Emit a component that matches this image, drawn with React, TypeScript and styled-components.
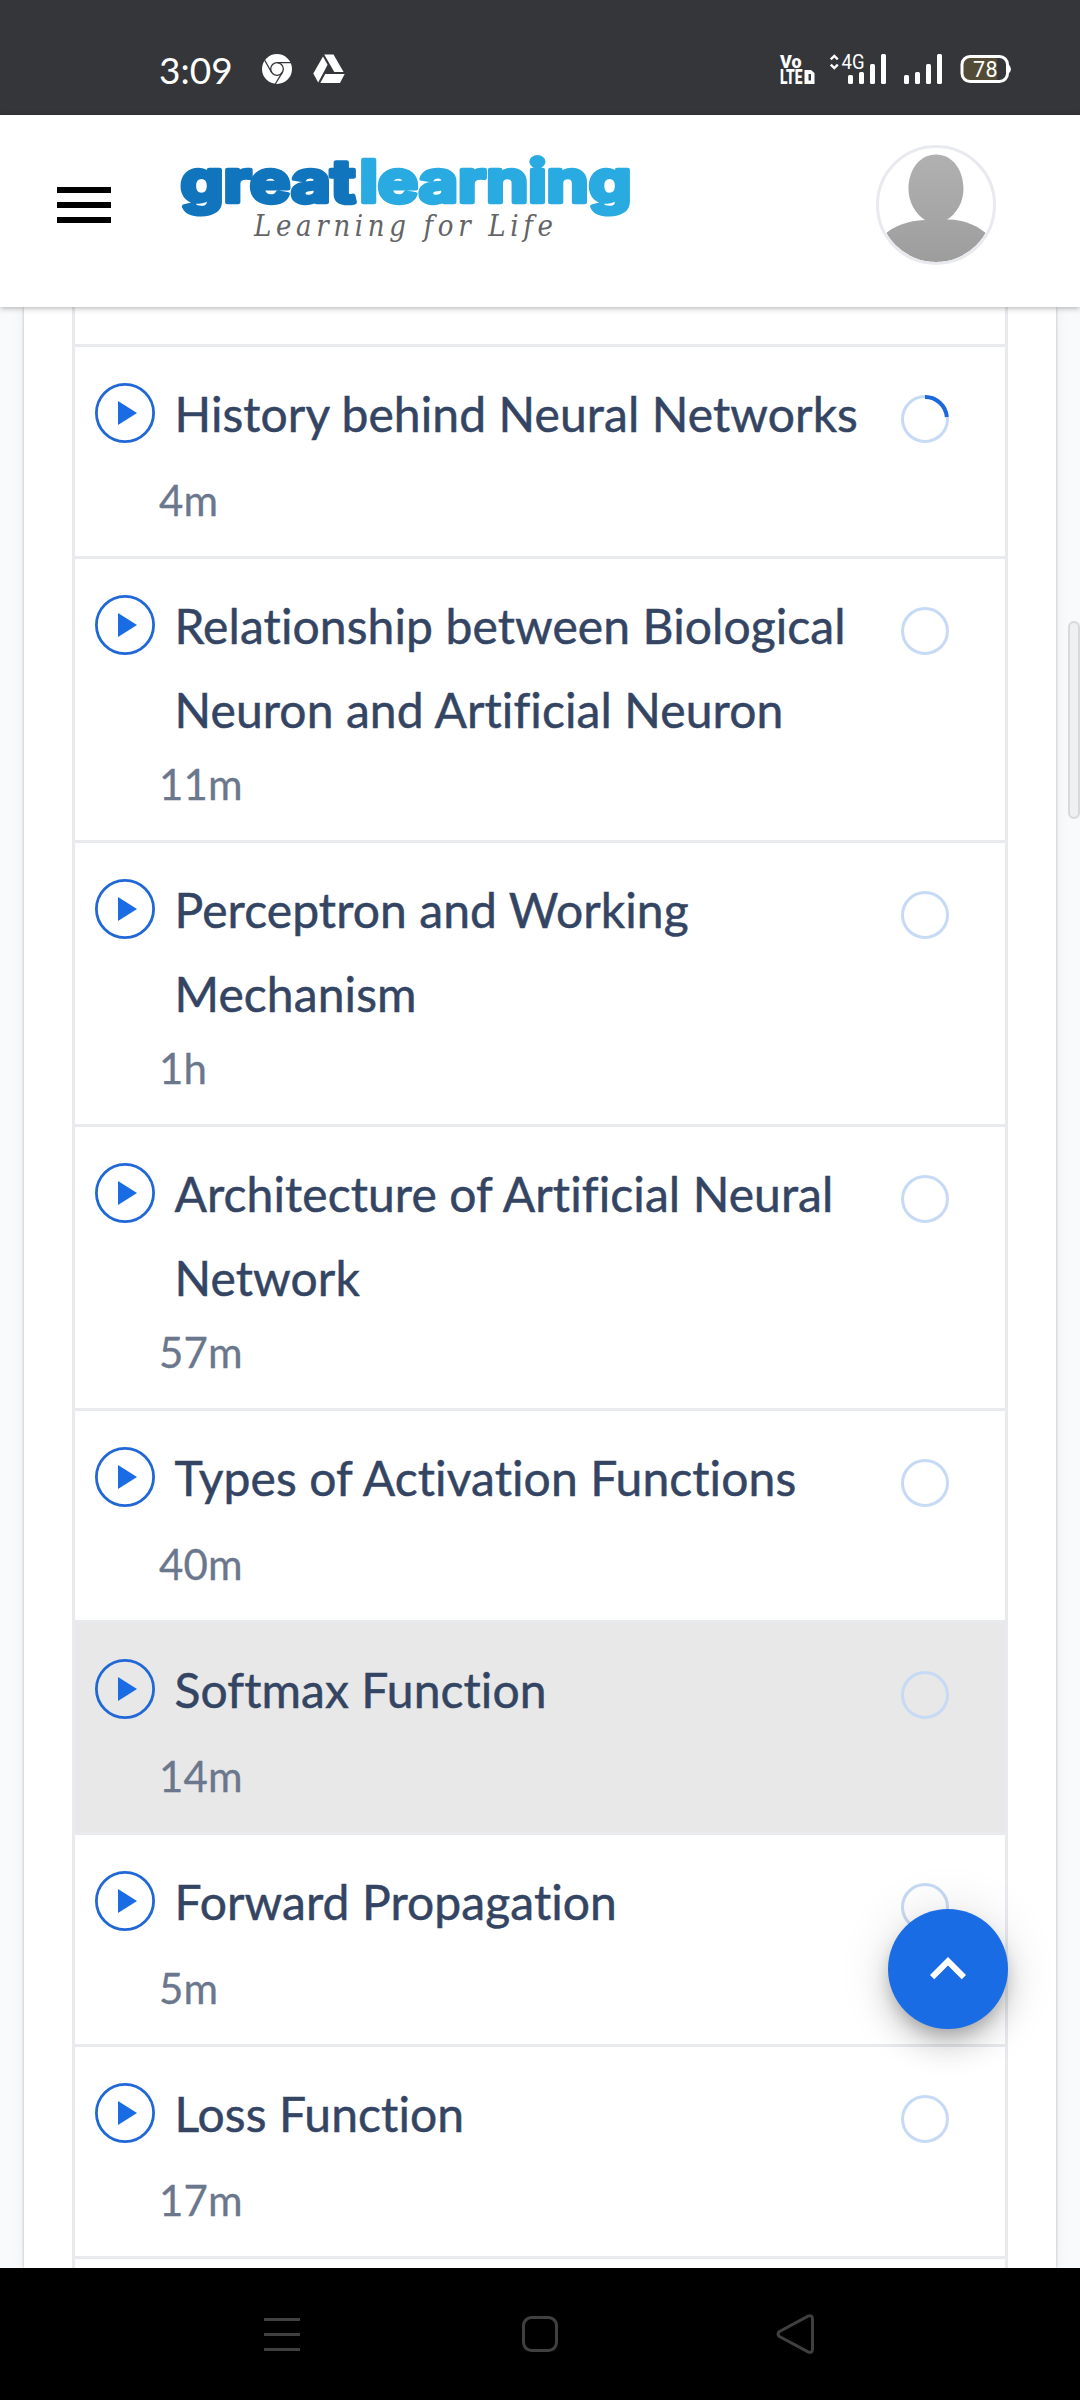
import React from "react";
import styled, { createGlobalStyle } from "styled-components";

const GlobalStyle = createGlobalStyle`
  *, *::before, *::after { box-sizing: border-box; }
  body { margin: 0; background: #ffffff; font-family: Lato, "Open Sans", sans-serif; }
  svg { display: block; flex: none; overflow: visible; }
`;

const Screen = styled.div`
  position: relative;
  display: flex;
  flex-direction: column;
  width: 1080px;
  height: 2400px;
  overflow: hidden;
`;

const StatusBar = styled.div`
  display: flex;
  flex: none;
  align-items: center;
  height: 115px;
  padding: 23px 69px 0 159px;
  background: #35363a;
  color: #ffffff;
`;

const Clock = styled.span`
  width: 103px;
  padding-top: 1px;
  font-size: 37px;
  line-height: 44px;
`;

const StatusIcons = styled.div<{ $gap: number; $end?: boolean }>`
  display: flex;
  align-items: center;
  gap: ${(p) => p.$gap}px;
  margin-left: ${(p) => (p.$end ? "auto" : "0")};
`;

const Header = styled.header`
  position: relative;
  z-index: 1;
  display: flex;
  flex: none;
  align-items: flex-start;
  height: 192px;
  padding: 30px 84px 0 57px;
  background: #ffffff;
  box-shadow: 0 1px 6px rgba(0, 0, 0, 0.32);
`;

const MenuButton = styled.button`
  display: flex;
  flex-direction: column;
  gap: 9px;
  width: 54px;
  margin: 42px 67px 0 0;
  padding: 0;
  border: 0;
  background: none;
`;

const MenuBar = styled.span`
  height: 6px;
  background: #000000;
`;

const Avatar = styled.div`
  width: 120px;
  height: 120px;
  margin-left: auto;
  border: 3px solid #e9eaef;
  border-radius: 50%;
  overflow: hidden;
`;

const Main = styled.main`
  flex: 1;
  min-height: 0;
  overflow: hidden;
  padding: 0 24px;
  background: #f8fafc;
`;

const Card = styled.section`
  height: 100%;
  padding: 0 48px;
  background: #ffffff;
  box-shadow: 0 0 3px rgba(0, 0, 0, 0.26), 0 0 16px rgba(0, 0, 0, 0.05);
`;

const LessonList = styled.ul`
  height: 100%;
  margin: 0;
  padding: 0;
  overflow: hidden;
  border: solid #e9eaee;
  border-width: 0 3px;
  list-style: none;
`;

const PreviousRow = styled.li`
  height: 40px;
  border-bottom: 3px solid #e9eaee;
`;

const LessonRow = styled.li<{ $active?: boolean }>`
  padding: 25px 56px 23px 20px;
  border-bottom: 3px solid #e9eaee;
  background: ${(p) => (p.$active ? "#e8e8e8" : "#ffffff")};
`;

const LessonTop = styled.div`
  display: grid;
  grid-template-columns: 60px 1fr 48px;
  column-gap: 19.5px;
  align-items: start;
  min-height: 95px;
`;

const IconSlot = styled.span<{ $top: number }>`
  padding-top: ${(p) => p.$top}px;
`;

const Title = styled.span<{ $lines: number }>`
  height: ${(p) => p.$lines * 84 - (p.$lines > 1 ? 1 : 0)}px;
  color: #344563;
  font-size: 48px;
  font-variant-ligatures: none;
  letter-spacing: 0.09px;
  line-height: 84px;
  white-space: pre;
  -webkit-text-stroke: 0.5px #344563;
`;

const Duration = styled.div`
  padding-left: 64px;
  color: #6b778c;
  font-size: 42px;
  letter-spacing: 0.2px;
  line-height: 66px;
  -webkit-text-stroke: 0.3px #6b778c;
`;

const ScrollThumb = styled.div`
  position: absolute;
  top: 621px;
  right: 0;
  width: 12px;
  height: 198px;
  border: 2px solid #d7d9da;
  border-radius: 6px;
  background: #f0f0f0;
`;

const TopButton = styled.button`
  position: absolute;
  right: 72px;
  bottom: 371px;
  z-index: 2;
  display: flex;
  align-items: center;
  justify-content: center;
  width: 120px;
  height: 120px;
  padding: 0;
  border: 0;
  border-radius: 50%;
  background: #1a6ce4;
  box-shadow: 0 9px 15px -3px rgba(0, 0, 0, 0.2), 0 18px 30px rgba(0, 0, 0, 0.14),
    0 3px 54px rgba(0, 0, 0, 0.12);
`;

const NavBar = styled.nav`
  display: grid;
  flex: none;
  grid-template-columns: repeat(3, 258px);
  justify-content: center;
  justify-items: center;
  height: 132px;
  padding-top: 44px;
  background: #000000;
`;

const lessons = [
  { title: "History behind Neural Networks", time: "4m", started: true },
  { title: "Relationship between Biological\nNeuron and Artificial Neuron", time: "11m" },
  { title: "Perceptron and Working\nMechanism", time: "1h" },
  { title: "Architecture of Artificial Neural\nNetwork", time: "57m" },
  { title: "Types of Activation Functions", time: "40m" },
  { title: "Softmax Function", time: "14m", active: true },
  { title: "Forward Propagation", time: "5m" },
  { title: "Loss Function", time: "17m" },
];

const PlayIcon = () => (
  <svg width="60" height="60" viewBox="0 0 60 60">
    <circle cx="30" cy="30" r="28.6" fill="none" stroke="#2068d6" strokeWidth="2.8" />
    <path d="M23 18L42 30L23 42Z" fill="#1a6ce4" />
  </svg>
);

const ProgressRing = ({ started }: { started?: boolean }) => (
  <svg width="48" height="48" viewBox="0 0 48 48" fill="none">
    <circle cx="24" cy="24" r="22.5" stroke="#c7daf5" strokeWidth="3" />
    {started && <path d="M24 2A21.8 21.8 0 0 1 45.8 22" stroke="#1b68da" strokeWidth="4" />}
  </svg>
);

const ChromeIcon = () => (
  <svg width="30" height="30" viewBox="0 0 30 30">
    <circle cx="15" cy="15" r="15" fill="#fff" />
    <g fill="none" stroke="#35363a" strokeWidth="1.3">
      <circle cx="15" cy="15" r="6.3" />
      <path d="M15 8.7H29M9.5 18.2L2.7 6.3M20.5 18.2L13.3 30" />
    </g>
  </svg>
);

const DriveIcon = () => (
  <svg width="32" height="30" viewBox="0 0 32 30" fill="#fff">
    <path d="M11.2 0.5H20.5L30.6 18H21.3Z" />
    <path d="M10 2.5L14.6 10.7L5.2 28.5L0.3 19.5Z" />
    <path d="M12.2 20H31.7L27 29H7.3Z" />
  </svg>
);

const Bars = () => (
  <g fill="#fff">
    <rect x="0" y="21" width="5" height="9" rx="1.5" />
    <rect x="11" y="18" width="5" height="12" rx="1.5" />
    <rect x="22" y="10" width="5" height="20" rx="1.5" />
    <rect x="33" y="0" width="5" height="30" rx="1.5" />
  </g>
);

const VolteIcon = () => (
  <svg width="35" height="30" viewBox="-3 0 35 30" fill="#fff" fontFamily="Roboto, sans-serif" fontWeight="900">
    <text x="0" y="14" fontSize="18.5" textLength="21.5" lengthAdjust="spacingAndGlyphs">Vo</text>
    <text x="0" y="30" fontSize="19.5" textLength="22.5" lengthAdjust="spacingAndGlyphs">LTE</text>
    <path fillRule="evenodd" d="M24.5 16H31L34.5 19V30H24.5ZM28.5 20V26.5H31V20Z" />
  </svg>
);

const MobileSignal = () => (
  <svg width="56" height="30" viewBox="0 0 56 30">
    <path d="M0.8 5.4L4.3 2L7.8 5.4M0.8 10.6L4.3 14L7.8 10.6" fill="none" stroke="#fff" strokeWidth="2.4" />
    <text x="11.5" y="14.5" fill="#fff" fontFamily="Roboto, sans-serif" fontSize="20" textLength="23" lengthAdjust="spacingAndGlyphs">4G</text>
    <g transform="translate(18 0)"><Bars /></g>
  </svg>
);

const Signal = () => (
  <svg width="38" height="30" viewBox="0 0 38 30"><Bars /></svg>
);

const Battery = () => (
  <svg width="51" height="30" viewBox="-1 0 51 30">
    <rect x="1" y="2.5" width="45.5" height="25" rx="8" fill="#35363a" />
    <path d="M9.5 2.5H36V27.5H9.5A8 8 0 0 1 1.5 19.5V10.5A8 8 0 0 1 9.5 2.5Z" fill="#534b35" />
    <rect x="1" y="2.5" width="45.5" height="25" rx="8" fill="none" stroke="#fff" strokeWidth="3" />
    <path d="M47 10Q50 12 50 15T47 20Z" fill="#fff" />
    <text x="12" y="22.5" fill="#fff" fontFamily="Roboto, sans-serif" fontSize="21.5" textLength="24.5">78</text>
  </svg>
);

const Logo = () => (
  <svg width="456" height="100" viewBox="178 145 456 100">
    <g fontFamily="Inter, sans-serif" fontWeight="700" fontSize="58" strokeWidth="4.5" strokeLinejoin="round">
      <text x="180.5" y="201.5" fill="#1175bd" stroke="#1175bd" textLength="175" lengthAdjust="spacingAndGlyphs">great</text>
      <text x="359.5" y="201.5" fill="#29abe2" stroke="#29abe2" textLength="272" lengthAdjust="spacingAndGlyphs">learning</text>
    </g>
    <text x="254" y="236" fill="#636466" fontFamily="DejaVu Serif Condensed, DejaVu Serif, serif" fontStyle="italic" fontSize="29" textLength="299">
      Learning for Life
    </text>
  </svg>
);

const Silhouette = () => (
  <svg width="114" height="114" viewBox="0 0 114 114">
    <defs>
      <linearGradient id="person" x1="0" y1="0" x2="0" y2="114" gradientUnits="userSpaceOnUse">
        <stop offset="0" stopColor="#b2b2b2" />
        <stop offset="1" stopColor="#9d9d9d" />
      </linearGradient>
      <clipPath id="round">
        <circle cx="57" cy="57" r="57" />
      </clipPath>
    </defs>
    <path
      clipPath="url(#round)"
      fill="url(#person)"
      d="M57 6.5C73 6.5 84.5 21 84.5 41C84.5 54 77.5 66 68 71.5C87 71.5 101 79 110 88V114H4V88C14 78 29 72.5 46 72C36.5 66 29.5 54 29.5 41C29.5 21 41 6.5 57 6.5Z"
    />
  </svg>
);

export default function App() {
  return (
    <Screen>
      <GlobalStyle />
      <StatusBar>
        <Clock>3:09</Clock>
        <StatusIcons $gap={21}>
          <ChromeIcon />
          <DriveIcon />
        </StatusIcons>
        <StatusIcons $gap={18} $end>
          <VolteIcon />
          <MobileSignal />
          <Signal />
          <Battery />
        </StatusIcons>
      </StatusBar>
      <Header>
        <MenuButton aria-label="Menu">
          <MenuBar />
          <MenuBar />
          <MenuBar />
        </MenuButton>
        <Logo />
        <Avatar>
          <Silhouette />
        </Avatar>
      </Header>
      <Main>
        <Card>
          <LessonList>
            <PreviousRow />
            {lessons.map((l) => (
              <LessonRow key={l.title} $active={l.active}>
                <LessonTop>
                  <IconSlot $top={11}>
                    <PlayIcon />
                  </IconSlot>
                  <Title $lines={l.title.split("\n").length}>{l.title}</Title>
                  <IconSlot $top={23}>
                    <ProgressRing started={l.started} />
                  </IconSlot>
                </LessonTop>
                <Duration>{l.time}</Duration>
              </LessonRow>
            ))}
          </LessonList>
        </Card>
      </Main>
      <NavBar>
        <svg width="36" height="44" viewBox="0 0 36 44" fill="#404040">
          <path d="M0 6H36V9H0ZM0 21H36V24H0ZM0 36H36V39H0Z" />
        </svg>
        <svg width="36" height="44" viewBox="0 0 36 44" fill="none" stroke="#404040" strokeWidth="3">
          <rect x="1.5" y="5.5" width="33" height="33" rx="8" />
        </svg>
        <svg width="44" height="44" viewBox="0 0 44 44" fill="none" stroke="#404040" strokeWidth="3">
          <path d="M3.5 19.5L32 4.2Q36.5 2.5 36.5 7V37Q36.5 41.5 32 39.8L3.5 24.5Q0.5 22 3.5 19.5Z" />
        </svg>
      </NavBar>
      <ScrollThumb />
      <TopButton aria-label="Back to top">
        <svg width="72" height="72" viewBox="0 0 24 24" fill="#fff">
          <path d="M7.41 15.41L12 10.83l4.59 4.58L18 14l-6-6-6 6z" />
        </svg>
      </TopButton>
    </Screen>
  );
}
